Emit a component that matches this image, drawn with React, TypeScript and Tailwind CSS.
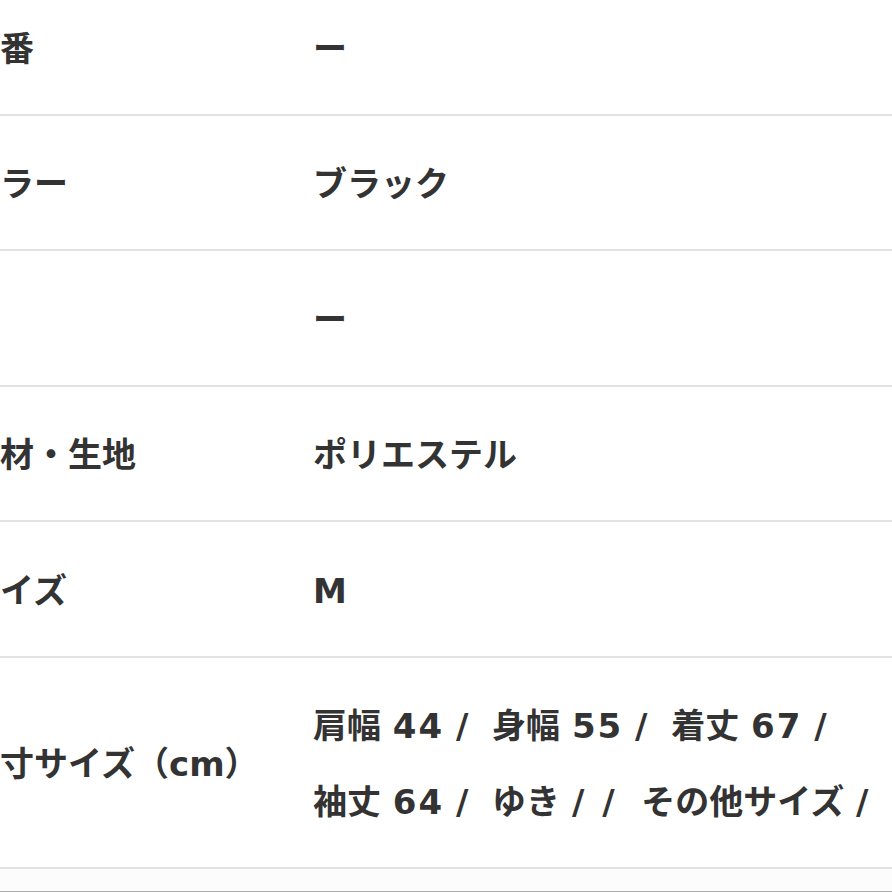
import React from "react";

type Row = { label: string; value: React.ReactNode };

const N = ({ children }: { children: React.ReactNode }) => (
  <span className="tracking-[2px]">{children}</span>
);

const rows: Row[] = [
  { label: "品番", value: "ー" },
  { label: "カラー", value: "ブラック" },
  { label: "", value: "ー" },
  { label: "素材・生地", value: "ポリエステル" },
  { label: "サイズ", value: "M" },
  {
    label: "実寸サイズ（cm）",
    value: (
      <>
        <span className="whitespace-pre">
          {"肩幅 "}<N>44</N>{" /  身幅 "}<N>55</N>{" /  着丈 "}<N>67</N>{" /"}
        </span>
        <br />
        <span className="whitespace-pre">
          {"袖丈 "}<N>64</N>{" /  ゆき "}<span className="tracking-[3px]">{"/ /"}</span>{"  その他サイズ /"}
        </span>
      </>
    ),
  },
];

export default function App() {
  return (
    <div className="w-[892px] h-[892px] overflow-hidden bg-white text-[#333333] font-bold text-[34px] font-['DejaVu_Sans','Noto_Sans_CJK_JP',sans-serif]">
      <div className="mt-[-20px] ml-[-34px] w-[926px]">
        {rows.map((r, i) => (
          <div
            key={i}
            className="grid grid-cols-[347px_1fr] items-center border-b-2 border-[#e2e2e2] pt-[30.5px] pb-[27px] leading-[76px]"
          >
            <div className="whitespace-nowrap">{r.label}</div>
            <div>{r.value}</div>
          </div>
        ))}
        <div className="h-[24px] bg-[#fcfcfc] border-b-2 border-[#ababab]" />
      </div>
    </div>
  );
}
